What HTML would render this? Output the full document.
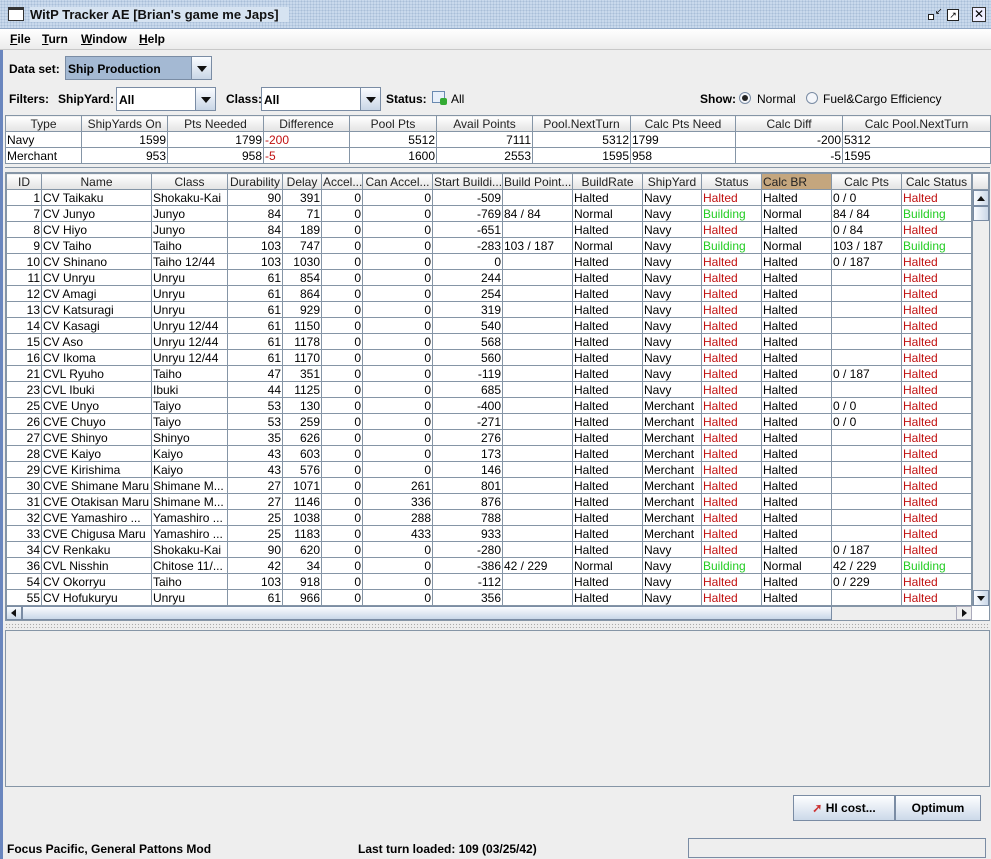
<!DOCTYPE html>
<html><head><meta charset="utf-8"><style>
*{box-sizing:border-box;margin:0;padding:0}
body{width:991px;height:859px;overflow:hidden;background:#eeeeee;font-family:"Liberation Sans",Arial,sans-serif;font-size:12px;color:#000;position:relative}
.abs{position:absolute}
.title{left:0;top:0;width:991px;height:29px;background:#c9d9ec;background-image:radial-gradient(#a9bed8 1px,transparent 1px);background-size:3px 3px;border-bottom:1px solid #8fa6c4}
.title .txt{position:absolute;left:30px;top:7px;font-weight:bold;font-size:13px;background:#d6e3f1;padding-right:10px;color:#111}
.menu{left:0;top:29px;width:991px;height:21px;background:linear-gradient(#fff,#ececec);border-bottom:1px solid #c8c8c8;font-weight:bold}
.menu span{position:absolute;top:3px}
.menu u{text-decoration:underline}
.b{font-weight:bold}
.combo{border:1px solid #7a8ca4;height:24px;background:#fff}
.arrow{position:absolute;right:0;top:0;width:20px;height:100%;border-left:1px solid #7a8ca4;background:linear-gradient(#fafcff,#c9d6e6)}
.arrow:after{content:"";position:absolute;left:5px;top:9px;border-left:5px solid transparent;border-right:5px solid transparent;border-top:6px solid #111}
table{border-collapse:collapse;table-layout:fixed;position:absolute;background:#fff}
td,th{border:1px solid #8595a6;height:16px;padding:0 1px;white-space:nowrap;overflow:hidden;font-weight:normal;line-height:14px;font-size:12px}
th{background:linear-gradient(#fff,#e3e3e3);text-align:center;color:#222}
.r{text-align:right}
.red{color:#c01010}
.grn{color:#22cc22}
.btn{border:1px solid #7a8ca4;background:linear-gradient(#fdfeff,#ccd9e9);height:26px;font-weight:bold;text-align:center;line-height:24px;font-size:12px}
</style></head><body>
<div class="abs" style="left:0;top:0;width:3px;height:859px;background:#6a86be"></div>
<div class="abs title"><div class="abs" style="left:8px;top:7px;width:16px;height:14px;border:1px solid #333;background:#fff;border-top-width:3px"></div><div class="txt">WitP Tracker AE [Brian's game me Japs]</div>
<div class="abs" style="left:928px;top:14px;width:6px;height:6px;border:1px solid #222;background:#fff"></div>
<div class="abs" style="left:935px;top:7px;font-size:9px;line-height:8px">&#8601;</div>
<div class="abs" style="left:947px;top:9px;width:12px;height:12px;border:1px solid #222;background:#fff;font-size:9px;line-height:10px;text-align:center">&#8599;</div>
<div class="abs" style="left:972px;top:7px;width:14px;height:15px;border:1px solid #333;background:#eef;font-size:12px;line-height:12px;text-align:center">&#10005;</div></div>
<div class="abs menu"><span style="left:10px"><u>F</u>ile</span><span style="left:42px"><u>T</u>urn</span><span style="left:81px"><u>W</u>indow</span><span style="left:139px"><u>H</u>elp</span></div>

<div class="abs b" style="left:9px;top:62px">Data set:</div>
<div class="abs combo" style="left:65px;top:56px;width:147px;background:#a4b9d3"><span class="abs b" style="left:2px;top:5px">Ship Production</span><div class="arrow"></div></div>

<div class="abs b" style="left:9px;top:92px">Filters:</div>
<div class="abs b" style="left:58px;top:92px">ShipYard:</div>
<div class="abs combo" style="left:116px;top:87px;width:100px"><span class="abs b" style="left:2px;top:5px">All</span><div class="arrow"></div></div>
<div class="abs b" style="left:226px;top:92px">Class:</div>
<div class="abs combo" style="left:261px;top:87px;width:120px"><span class="abs b" style="left:2px;top:5px">All</span><div class="arrow"></div></div>
<div class="abs b" style="left:386px;top:92px">Status:</div>
<div class="abs" style="left:432px;top:91px;width:13px;height:12px;border:1px solid #6a8ab0;background:#e8f0fa"></div>
<div class="abs" style="left:440px;top:98px;width:7px;height:7px;background:#3a3;border-radius:2px"></div>
<div class="abs" style="left:451px;top:92px">All</div>
<div class="abs b" style="left:700px;top:92px">Show:</div>
<div class="abs" style="left:739px;top:92px;width:12px;height:12px;border:1px solid #7a8ca4;border-radius:50%;background:#f4f6fa"><div class="abs" style="left:2px;top:2px;width:6px;height:6px;border-radius:50%;background:#222"></div></div>
<div class="abs" style="left:757px;top:92px">Normal</div>
<div class="abs" style="left:806px;top:92px;width:12px;height:12px;border:1px solid #7a8ca4;border-radius:50%;background:#f4f6fa"></div>
<div class="abs" style="left:823px;top:92px">Fuel&amp;Cargo Efficiency</div>

<table style="left:5px;top:115px;width:985px">
<colgroup><col style="width:76px"><col style="width:86px"><col style="width:96px"><col style="width:86px"><col style="width:87px"><col style="width:96px"><col style="width:98px"><col style="width:105px"><col style="width:107px"><col style="width:148px"></colgroup>
<tr><th>Type</th><th>ShipYards On</th><th>Pts Needed</th><th>Difference</th><th>Pool Pts</th><th>Avail Points</th><th>Pool.NextTurn</th><th>Calc Pts Need</th><th>Calc Diff</th><th>Calc Pool.NextTurn</th></tr>
<tr><td>Navy</td><td class="r">1599</td><td class="r">1799</td><td class="red">-200</td><td class="r">5512</td><td class="r">7111</td><td class="r">5312</td><td>1799</td><td class="r">-200</td><td>5312</td></tr>
<tr><td>Merchant</td><td class="r">953</td><td class="r">958</td><td class="red">-5</td><td class="r">1600</td><td class="r">2553</td><td class="r">1595</td><td>958</td><td class="r">-5</td><td>1595</td></tr>
</table>
<div class="abs" style="left:5px;top:167px;width:985px;height:2px;border-top:1px solid #8595a6"></div>

<div class="abs" style="left:5px;top:172px;width:985px;height:449px;border:1px solid #8595a6;background:#fff"></div>
<table style="left:6px;top:173px;width:966px">
<colgroup><col style="width:35px"><col style="width:110px"><col style="width:76px"><col style="width:55px"><col style="width:39px"><col style="width:41px"><col style="width:70px"><col style="width:70px"><col style="width:70px"><col style="width:70px"><col style="width:59px"><col style="width:60px"><col style="width:70px"><col style="width:70px"><col style="width:70px"></colgroup>
<tr><th>ID</th><th>Name</th><th>Class</th><th>Durability</th><th>Delay</th><th>Accel...</th><th>Can Accel...</th><th>Start Buildi...</th><th>Build Point...</th><th>BuildRate</th><th>ShipYard</th><th>Status</th><th style="background:#c4a67e;text-align:left">Calc BR</th><th>Calc Pts</th><th>Calc Status</th></tr>
<tr><td class="r">1</td><td>CV Taikaku</td><td>Shokaku-Kai</td><td class="r">90</td><td class="r">391</td><td class="r">0</td><td class="r">0</td><td class="r">-509</td><td></td><td>Halted</td><td>Navy</td><td class="red">Halted</td><td>Halted</td><td>0 / 0</td><td class="red">Halted</td></tr>
<tr><td class="r">7</td><td>CV Junyo</td><td>Junyo</td><td class="r">84</td><td class="r">71</td><td class="r">0</td><td class="r">0</td><td class="r">-769</td><td>84 / 84</td><td>Normal</td><td>Navy</td><td class="grn">Building</td><td>Normal</td><td>84 / 84</td><td class="grn">Building</td></tr>
<tr><td class="r">8</td><td>CV Hiyo</td><td>Junyo</td><td class="r">84</td><td class="r">189</td><td class="r">0</td><td class="r">0</td><td class="r">-651</td><td></td><td>Halted</td><td>Navy</td><td class="red">Halted</td><td>Halted</td><td>0 / 84</td><td class="red">Halted</td></tr>
<tr><td class="r">9</td><td>CV Taiho</td><td>Taiho</td><td class="r">103</td><td class="r">747</td><td class="r">0</td><td class="r">0</td><td class="r">-283</td><td>103 / 187</td><td>Normal</td><td>Navy</td><td class="grn">Building</td><td>Normal</td><td>103 / 187</td><td class="grn">Building</td></tr>
<tr><td class="r">10</td><td>CV Shinano</td><td>Taiho 12/44</td><td class="r">103</td><td class="r">1030</td><td class="r">0</td><td class="r">0</td><td class="r">0</td><td></td><td>Halted</td><td>Navy</td><td class="red">Halted</td><td>Halted</td><td>0 / 187</td><td class="red">Halted</td></tr>
<tr><td class="r">11</td><td>CV Unryu</td><td>Unryu</td><td class="r">61</td><td class="r">854</td><td class="r">0</td><td class="r">0</td><td class="r">244</td><td></td><td>Halted</td><td>Navy</td><td class="red">Halted</td><td>Halted</td><td></td><td class="red">Halted</td></tr>
<tr><td class="r">12</td><td>CV Amagi</td><td>Unryu</td><td class="r">61</td><td class="r">864</td><td class="r">0</td><td class="r">0</td><td class="r">254</td><td></td><td>Halted</td><td>Navy</td><td class="red">Halted</td><td>Halted</td><td></td><td class="red">Halted</td></tr>
<tr><td class="r">13</td><td>CV Katsuragi</td><td>Unryu</td><td class="r">61</td><td class="r">929</td><td class="r">0</td><td class="r">0</td><td class="r">319</td><td></td><td>Halted</td><td>Navy</td><td class="red">Halted</td><td>Halted</td><td></td><td class="red">Halted</td></tr>
<tr><td class="r">14</td><td>CV Kasagi</td><td>Unryu 12/44</td><td class="r">61</td><td class="r">1150</td><td class="r">0</td><td class="r">0</td><td class="r">540</td><td></td><td>Halted</td><td>Navy</td><td class="red">Halted</td><td>Halted</td><td></td><td class="red">Halted</td></tr>
<tr><td class="r">15</td><td>CV Aso</td><td>Unryu 12/44</td><td class="r">61</td><td class="r">1178</td><td class="r">0</td><td class="r">0</td><td class="r">568</td><td></td><td>Halted</td><td>Navy</td><td class="red">Halted</td><td>Halted</td><td></td><td class="red">Halted</td></tr>
<tr><td class="r">16</td><td>CV Ikoma</td><td>Unryu 12/44</td><td class="r">61</td><td class="r">1170</td><td class="r">0</td><td class="r">0</td><td class="r">560</td><td></td><td>Halted</td><td>Navy</td><td class="red">Halted</td><td>Halted</td><td></td><td class="red">Halted</td></tr>
<tr><td class="r">21</td><td>CVL Ryuho</td><td>Taiho</td><td class="r">47</td><td class="r">351</td><td class="r">0</td><td class="r">0</td><td class="r">-119</td><td></td><td>Halted</td><td>Navy</td><td class="red">Halted</td><td>Halted</td><td>0 / 187</td><td class="red">Halted</td></tr>
<tr><td class="r">23</td><td>CVL Ibuki</td><td>Ibuki</td><td class="r">44</td><td class="r">1125</td><td class="r">0</td><td class="r">0</td><td class="r">685</td><td></td><td>Halted</td><td>Navy</td><td class="red">Halted</td><td>Halted</td><td></td><td class="red">Halted</td></tr>
<tr><td class="r">25</td><td>CVE Unyo</td><td>Taiyo</td><td class="r">53</td><td class="r">130</td><td class="r">0</td><td class="r">0</td><td class="r">-400</td><td></td><td>Halted</td><td>Merchant</td><td class="red">Halted</td><td>Halted</td><td>0 / 0</td><td class="red">Halted</td></tr>
<tr><td class="r">26</td><td>CVE Chuyo</td><td>Taiyo</td><td class="r">53</td><td class="r">259</td><td class="r">0</td><td class="r">0</td><td class="r">-271</td><td></td><td>Halted</td><td>Merchant</td><td class="red">Halted</td><td>Halted</td><td>0 / 0</td><td class="red">Halted</td></tr>
<tr><td class="r">27</td><td>CVE Shinyo</td><td>Shinyo</td><td class="r">35</td><td class="r">626</td><td class="r">0</td><td class="r">0</td><td class="r">276</td><td></td><td>Halted</td><td>Merchant</td><td class="red">Halted</td><td>Halted</td><td></td><td class="red">Halted</td></tr>
<tr><td class="r">28</td><td>CVE Kaiyo</td><td>Kaiyo</td><td class="r">43</td><td class="r">603</td><td class="r">0</td><td class="r">0</td><td class="r">173</td><td></td><td>Halted</td><td>Merchant</td><td class="red">Halted</td><td>Halted</td><td></td><td class="red">Halted</td></tr>
<tr><td class="r">29</td><td>CVE Kirishima</td><td>Kaiyo</td><td class="r">43</td><td class="r">576</td><td class="r">0</td><td class="r">0</td><td class="r">146</td><td></td><td>Halted</td><td>Merchant</td><td class="red">Halted</td><td>Halted</td><td></td><td class="red">Halted</td></tr>
<tr><td class="r">30</td><td>CVE Shimane Maru</td><td>Shimane M...</td><td class="r">27</td><td class="r">1071</td><td class="r">0</td><td class="r">261</td><td class="r">801</td><td></td><td>Halted</td><td>Merchant</td><td class="red">Halted</td><td>Halted</td><td></td><td class="red">Halted</td></tr>
<tr><td class="r">31</td><td>CVE Otakisan Maru</td><td>Shimane M...</td><td class="r">27</td><td class="r">1146</td><td class="r">0</td><td class="r">336</td><td class="r">876</td><td></td><td>Halted</td><td>Merchant</td><td class="red">Halted</td><td>Halted</td><td></td><td class="red">Halted</td></tr>
<tr><td class="r">32</td><td>CVE Yamashiro ...</td><td>Yamashiro ...</td><td class="r">25</td><td class="r">1038</td><td class="r">0</td><td class="r">288</td><td class="r">788</td><td></td><td>Halted</td><td>Merchant</td><td class="red">Halted</td><td>Halted</td><td></td><td class="red">Halted</td></tr>
<tr><td class="r">33</td><td>CVE Chigusa Maru</td><td>Yamashiro ...</td><td class="r">25</td><td class="r">1183</td><td class="r">0</td><td class="r">433</td><td class="r">933</td><td></td><td>Halted</td><td>Merchant</td><td class="red">Halted</td><td>Halted</td><td></td><td class="red">Halted</td></tr>
<tr><td class="r">34</td><td>CV Renkaku</td><td>Shokaku-Kai</td><td class="r">90</td><td class="r">620</td><td class="r">0</td><td class="r">0</td><td class="r">-280</td><td></td><td>Halted</td><td>Navy</td><td class="red">Halted</td><td>Halted</td><td>0 / 187</td><td class="red">Halted</td></tr>
<tr><td class="r">36</td><td>CVL Nisshin</td><td>Chitose 11/...</td><td class="r">42</td><td class="r">34</td><td class="r">0</td><td class="r">0</td><td class="r">-386</td><td>42 / 229</td><td>Normal</td><td>Navy</td><td class="grn">Building</td><td>Normal</td><td>42 / 229</td><td class="grn">Building</td></tr>
<tr><td class="r">54</td><td>CV Okorryu</td><td>Taiho</td><td class="r">103</td><td class="r">918</td><td class="r">0</td><td class="r">0</td><td class="r">-112</td><td></td><td>Halted</td><td>Navy</td><td class="red">Halted</td><td>Halted</td><td>0 / 229</td><td class="red">Halted</td></tr>
<tr><td class="r">55</td><td>CV Hofukuryu</td><td>Unryu</td><td class="r">61</td><td class="r">966</td><td class="r">0</td><td class="r">0</td><td class="r">356</td><td></td><td>Halted</td><td>Navy</td><td class="red">Halted</td><td>Halted</td><td></td><td class="red">Halted</td></tr>
</table>
<div class="abs" style="left:972px;top:173px;width:17px;height:17px;background:linear-gradient(#fff,#e3e3e3);border:1px solid #8595a6"></div>
<div class="abs" style="left:972px;top:190px;width:17px;height:416px;background:#eeeeee;border-left:1px solid #8595a6"></div>
<div class="abs" style="left:973px;top:190px;width:16px;height:16px;background:linear-gradient(90deg,#fafcff,#cbd8e8);border:1px solid #7a8ca4"><div class="abs" style="left:3px;top:5px;border-left:4px solid transparent;border-right:4px solid transparent;border-bottom:5px solid #111"></div></div>
<div class="abs" style="left:973px;top:206px;width:16px;height:15px;background:linear-gradient(90deg,#fafcff,#cbd8e8);border:1px solid #7a8ca4"></div>
<div class="abs" style="left:973px;top:590px;width:16px;height:16px;background:linear-gradient(90deg,#fafcff,#cbd8e8);border:1px solid #7a8ca4"><div class="abs" style="left:3px;top:5px;border-left:4px solid transparent;border-right:4px solid transparent;border-top:5px solid #111"></div></div>
<div class="abs" style="left:6px;top:606px;width:966px;height:14px;background:#eeeeee;border-top:1px solid #8595a6"></div>
<div class="abs" style="left:6px;top:606px;width:16px;height:14px;background:linear-gradient(#fafcff,#cbd8e8);border:1px solid #7a8ca4"><div class="abs" style="left:4px;top:2px;border-top:4px solid transparent;border-bottom:4px solid transparent;border-right:5px solid #111"></div></div>
<div class="abs" style="left:22px;top:606px;width:810px;height:14px;background:linear-gradient(#fafcff,#c9d7e8);border:1px solid #7a8ca4"></div>
<div class="abs" style="left:956px;top:606px;width:16px;height:14px;background:#eeeeee;border:1px solid #aab"><div class="abs" style="left:5px;top:2px;border-top:4px solid transparent;border-bottom:4px solid transparent;border-left:5px solid #111"></div></div>
<div class="abs" style="left:5px;top:623px;width:985px;height:6px;background-image:radial-gradient(#aaa 0.7px,transparent 0.8px);background-size:3px 3px"></div>
<div class="abs" style="left:5px;top:630px;width:985px;height:157px;border:1px solid #8595a6"></div>

<div class="abs btn" style="left:793px;top:795px;width:102px"><span style="color:#c33">&#10138;</span> HI cost...</div>
<div class="abs btn" style="left:895px;top:795px;width:86px">Optimum</div>

<div class="abs b" style="left:7px;top:842px">Focus Pacific, General Pattons Mod</div>
<div class="abs b" style="left:358px;top:842px">Last turn loaded: 109 (03/25/42)</div>
<div class="abs" style="left:688px;top:838px;width:298px;height:20px;border:1px solid #7a8ca4;background:#eeeeee"></div>
</body></html>
